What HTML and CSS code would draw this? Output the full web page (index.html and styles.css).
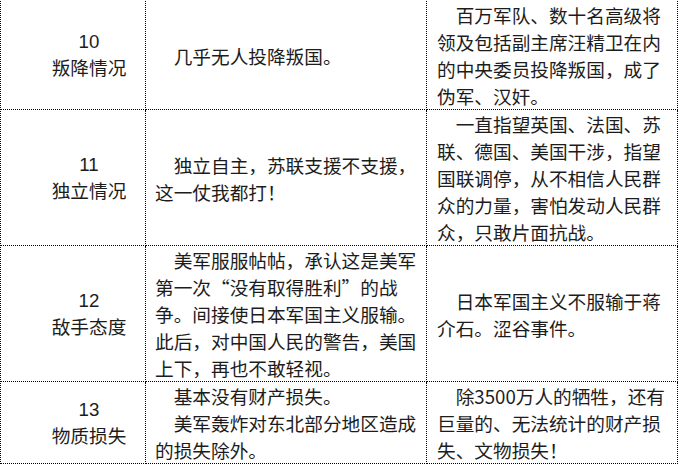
FILE: index.html
```html
<!DOCTYPE html>
<html lang="zh-CN">
<head>
<meta charset="utf-8">
<title>对比表</title>
<link rel="stylesheet" href="styles.css">
</head>
<body>
<div class="compare">
  <div class="cell topic"><div>10</div><div>叛降情况</div></div>
  <div class="cell desc mid"><p>几乎无人投降叛国。</p></div>
  <div class="cell desc wide"><p>百万军队、数十名高级将领及包括副主席汪精卫在内的中央委员投降叛国，成了伪军、汉奸。</p></div>

  <div class="cell topic"><div>11</div><div>独立情况</div></div>
  <div class="cell desc mid"><p>独立自主，苏联支援不支援，这一仗我都打！</p></div>
  <div class="cell desc wide"><p>一直指望英国、法国、苏联、德国、美国干涉，指望国联调停，从不相信人民群众的力量，害怕发动人民群众，只敢片面抗战。</p></div>

  <div class="cell topic"><div>12</div><div>敌手态度</div></div>
  <div class="cell desc mid"><p>美军服服帖帖，承认这是美军第一次“没有取得胜利”的战争。间接使日本军国主义服输。此后，对中国人民的警告，美国上下，再也不敢轻视。</p></div>
  <div class="cell desc wide"><p>日本军国主义不服输于蒋介石。涩谷事件。</p></div>

  <div class="cell topic"><div>13</div><div>物质损失</div></div>
  <div class="cell desc mid"><p>基本没有财产损失。</p><p>美军轰炸对东北部分地区造成的损失除外。</p></div>
  <div class="cell desc wide"><p>除3500万人的牺牲，还有巨量的、无法统计的财产损失、文物损失！</p></div>
</div>
</body>
</html>
```

FILE: styles.css
```css
html, body {
  margin: 0;
  padding: 0;
  background: #ffffff;
}

body {
  overflow: hidden;
  color: #1c1c1c;
  font-family: "Noto Sans CJK SC", sans-serif;
  font-size: 18.67px;
  line-height: 27px;
}

.compare {
  margin-top: 1px;
  display: grid;
  grid-template-columns: 145px 281px 251px;
  border-left: 1px dotted #000;
  width: 677px;
}

.cell {
  border-right: 1px dotted #000;
  border-bottom: 1px dotted #000;
  display: flex;
  flex-direction: column;
  justify-content: center;
}

.topic {
  align-items: center;
  padding-left: 32px;
  font-family: "Liberation Sans", "Noto Sans CJK SC", sans-serif;
}

.mid {
  padding: 0 9px;
}

.wide {
  padding: 0 10px;
}

.desc p {
  margin: 0;
  text-indent: 1em;
}
```
